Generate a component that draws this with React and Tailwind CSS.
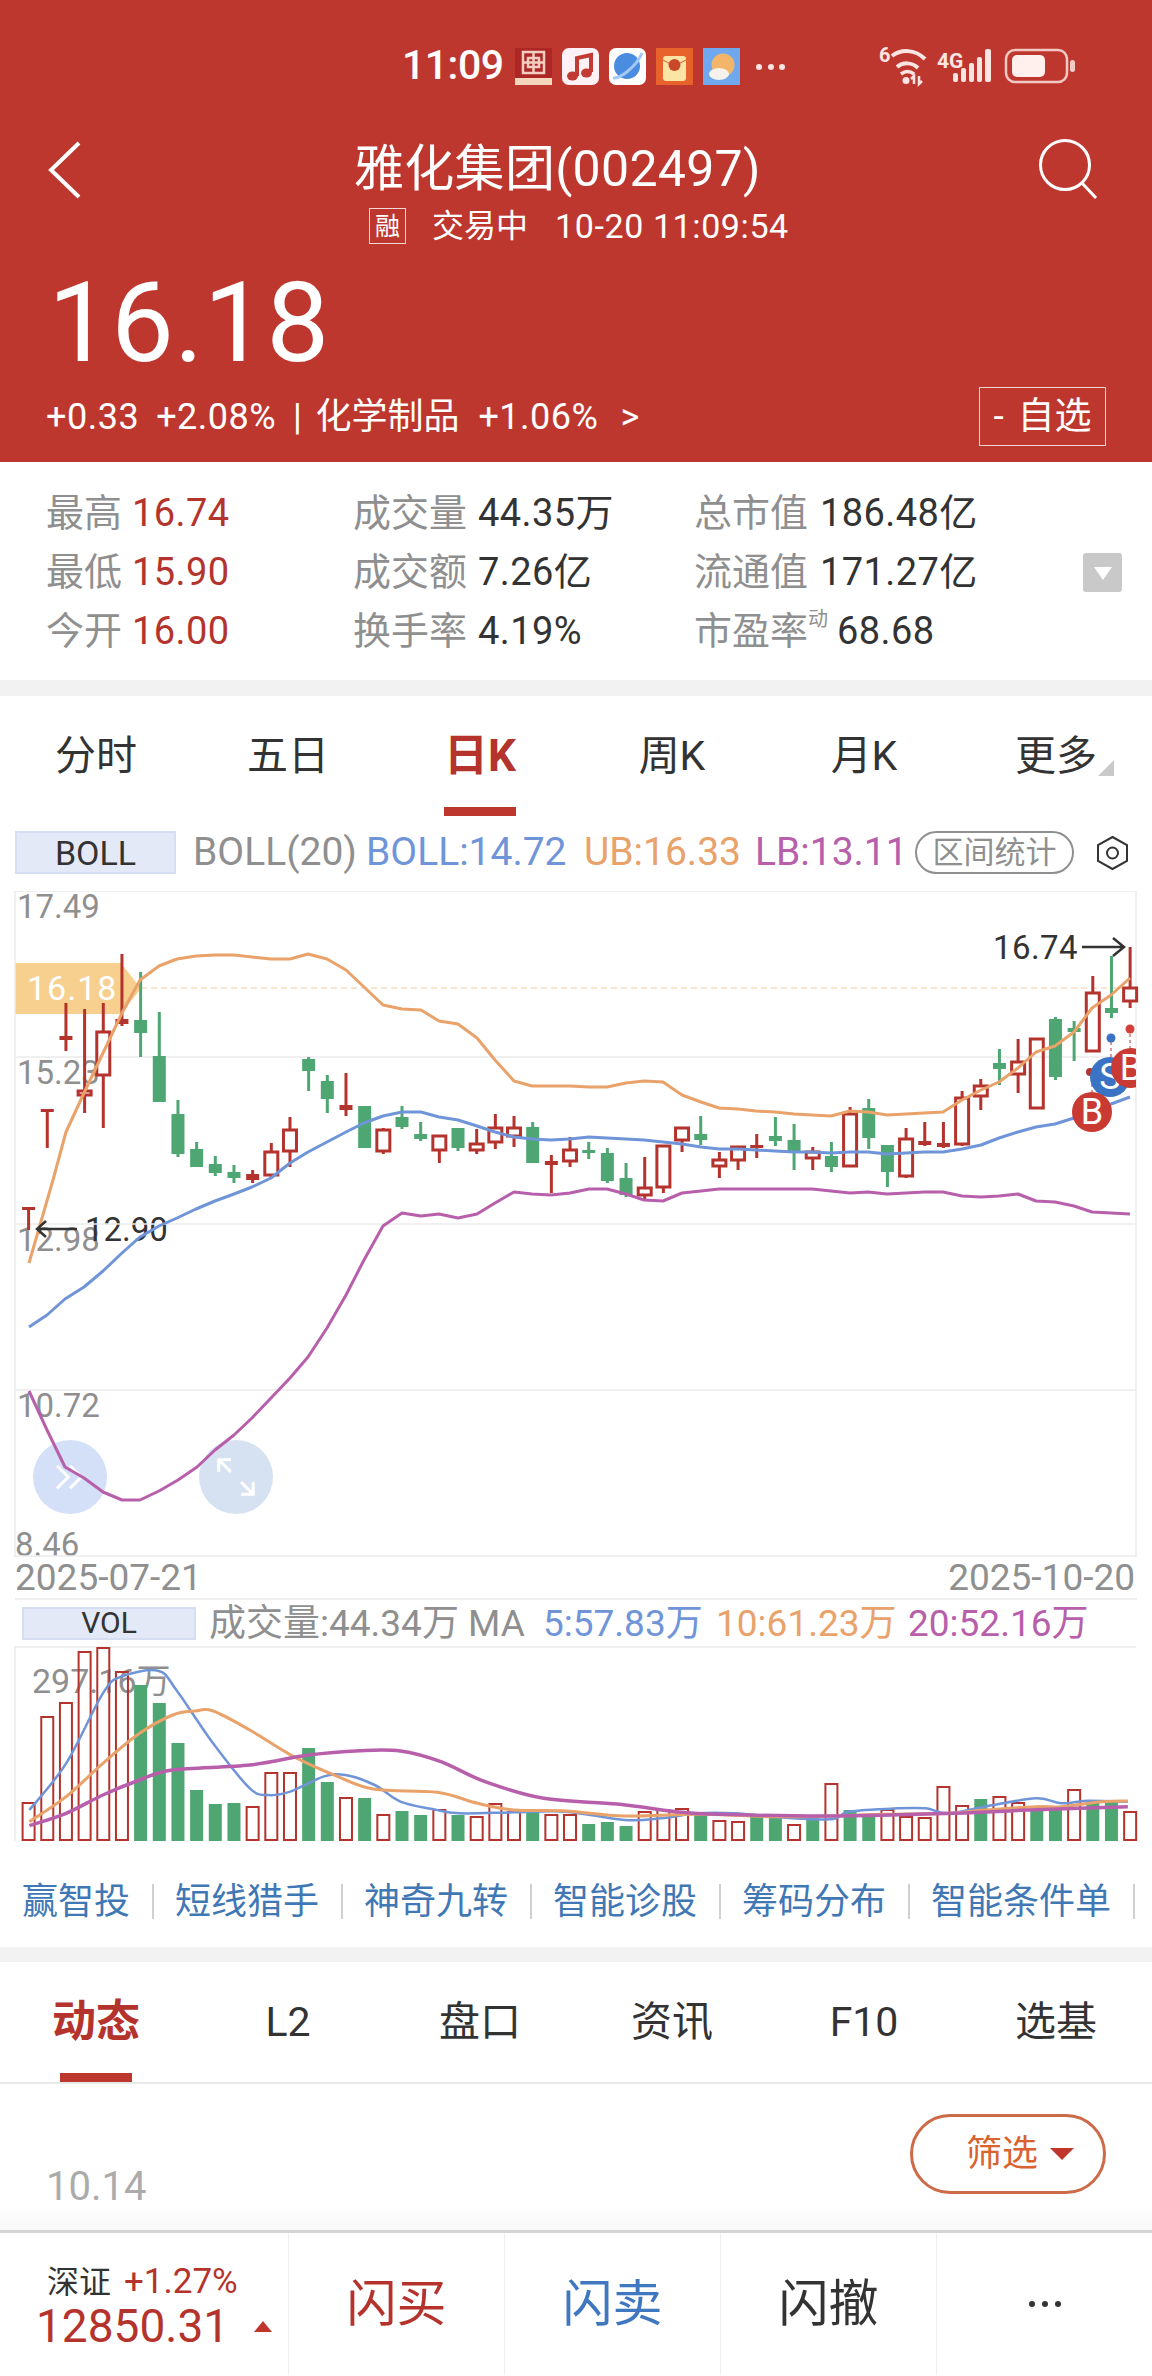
const RED = "#b5332d";
const GREEN = "#4ea672";
const ORANGE = "#e8a26a";
const BLUE = "#6f95d8";
const PURPLE = "#b85fab";

// high, body top, body bottom, low, type (r hollow red, f filled red, g green)
const candles = [
  [1207, 1207, 1210, 1230, "f"], [1109, 1109, 1112, 1148, "f"], [1003, 1036, 1040, 1051, "f"], [1009, 1090, 1096, 1113, "r"],
  [1003, 1031, 1076, 1128, "r"], [954, 1019, 1024, 1026, "f"], [972, 1020, 1033, 1057, "g"], [1012, 1056, 1102, 1102, "g"],
  [1100, 1114, 1154, 1157, "g"], [1142, 1149, 1167, 1167, "g"], [1156, 1164, 1173, 1176, "g"], [1165, 1172, 1178, 1183, "g"],
  [1170, 1174, 1180, 1183, "f"], [1143, 1151, 1176, 1178, "r"], [1117, 1129, 1152, 1167, "r"], [1057, 1059, 1071, 1091, "g"],
  [1075, 1081, 1099, 1113, "g"], [1073, 1105, 1110, 1116, "f"], [1106, 1106, 1148, 1148, "g"], [1128, 1129, 1152, 1154, "r"],
  [1106, 1117, 1127, 1129, "g"], [1122, 1134, 1139, 1141, "g"], [1135, 1135, 1151, 1163, "r"], [1128, 1128, 1148, 1151, "g"],
  [1129, 1143, 1151, 1154, "r"], [1114, 1127, 1143, 1149, "r"], [1116, 1127, 1137, 1147, "r"], [1122, 1127, 1163, 1163, "g"],
  [1155, 1161, 1165, 1193, "f"], [1137, 1149, 1162, 1167, "r"], [1142, 1150, 1153, 1159, "g"], [1148, 1153, 1181, 1183, "g"],
  [1163, 1178, 1195, 1197, "g"], [1157, 1187, 1196, 1201, "r"], [1145, 1145, 1188, 1193, "r"], [1127, 1127, 1141, 1152, "r"],
  [1116, 1134, 1140, 1145, "g"], [1152, 1159, 1167, 1178, "r"], [1146, 1146, 1161, 1170, "r"], [1134, 1145, 1148, 1158, "f"],
  [1117, 1136, 1141, 1146, "g"], [1124, 1140, 1153, 1170, "g"], [1147, 1151, 1159, 1170, "r"], [1142, 1156, 1167, 1172, "g"],
  [1107, 1113, 1167, 1167, "r"], [1099, 1108, 1138, 1149, "g"], [1145, 1145, 1172, 1187, "g"], [1128, 1138, 1177, 1178, "r"],
  [1122, 1141, 1145, 1146, "f"], [1122, 1143, 1147, 1148, "f"], [1091, 1097, 1145, 1146, "r"], [1079, 1085, 1097, 1110, "r"],
  [1049, 1063, 1069, 1085, "g"], [1039, 1061, 1075, 1093, "r"], [1038, 1038, 1109, 1109, "r"], [1017, 1019, 1077, 1080, "g"],
  [1021, 1028, 1032, 1061, "g"], [976, 992, 1052, 1052, "r"], [956, 1008, 1013, 1018, "g"], [947, 987, 1002, 1008, "r"],
];

const upper = [[29,1263],[53,1180],[66,1132],[84,1093],[103,1053],[122,1013],[140,980],[159,966],[177,959],[196,956],[215,955],[234,955],[252,957],[271,959],[290,959],[308,954],[327,959],[346,970],[364,987],[383,1005],[402,1009],[421,1010],[439,1021],[458,1024],[477,1038],[495,1060],[514,1081],[532,1086],[551,1086],[570,1086],[589,1087],[607,1087],[626,1083],[644,1081],[663,1082],[682,1095],[701,1102],[719,1108],[738,1109],[756,1111],[775,1112],[794,1114],[812,1115],[831,1116],[850,1111],[868,1112],[887,1115],[906,1114],[924,1113],[943,1112],[962,1100],[981,1090],[999,1082],[1018,1068],[1036,1052],[1055,1046],[1074,1032],[1092,1008],[1111,995],[1130,978]];
const middle = [[29,1327],[47,1315],[65,1299],[84,1287],[103,1271],[122,1253],[140,1237],[159,1226],[177,1218],[196,1209],[215,1201],[234,1194],[252,1187],[271,1178],[290,1163],[308,1152],[327,1142],[346,1132],[364,1123],[383,1116],[402,1112],[421,1112],[439,1117],[458,1120],[477,1126],[495,1132],[514,1137],[532,1139],[551,1140],[570,1139],[589,1137],[607,1138],[626,1139],[644,1140],[663,1142],[682,1144],[701,1147],[719,1149],[738,1149],[756,1150],[775,1151],[794,1152],[812,1152],[831,1153],[850,1152],[868,1152],[887,1154],[906,1153],[924,1152],[943,1152],[962,1149],[981,1145],[999,1138],[1018,1132],[1036,1127],[1055,1124],[1074,1118],[1092,1112],[1111,1104],[1130,1097]];
const lower = [[29,1391],[47,1430],[65,1467],[84,1478],[103,1492],[122,1500],[140,1500],[159,1491],[178,1480],[197,1467],[215,1450],[234,1435],[252,1418],[271,1398],[290,1378],[308,1357],[327,1328],[346,1295],[364,1260],[383,1226],[402,1213],[421,1216],[439,1214],[458,1218],[477,1214],[495,1203],[514,1192],[532,1194],[551,1195],[570,1193],[589,1189],[607,1189],[626,1194],[644,1200],[663,1201],[682,1193],[701,1191],[719,1189],[738,1189],[756,1189],[775,1189],[794,1189],[812,1189],[831,1191],[850,1193],[868,1192],[887,1194],[906,1193],[924,1192],[943,1192],[962,1196],[981,1197],[999,1196],[1018,1194],[1036,1201],[1055,1202],[1074,1206],[1092,1212],[1111,1213],[1130,1214]];

// top of each volume bar, r = hollow red, g = green
const volumes = [
  [1803,"r"],[1717,"r"],[1703,"r"],[1652,"r"],[1648,"r"],[1672,"r"],[1685,"g"],[1703,"g"],[1743,"g"],[1790,"g"],
  [1804,"g"],[1803,"g"],[1807,"r"],[1773,"r"],[1773,"r"],[1748,"g"],[1782,"g"],[1798,"r"],[1798,"g"],[1815,"r"],
  [1811,"g"],[1815,"g"],[1810,"r"],[1815,"g"],[1817,"r"],[1804,"r"],[1812,"r"],[1812,"g"],[1815,"r"],[1815,"r"],
  [1824,"g"],[1822,"g"],[1826,"g"],[1812,"r"],[1810,"r"],[1809,"r"],[1813,"g"],[1821,"r"],[1822,"r"],[1817,"g"],
  [1817,"g"],[1825,"r"],[1818,"g"],[1784,"r"],[1810,"g"],[1815,"g"],[1810,"r"],[1817,"r"],[1818,"r"],[1787,"r"],
  [1806,"r"],[1799,"g"],[1797,"r"],[1803,"r"],[1810,"g"],[1808,"g"],[1790,"r"],[1800,"g"],[1802,"g"],[1812,"r"],
];

const vol = (pts) => pts.map(([x, y]) => [x / 1.361, 1480 + y / 3]);
const vol5 = vol([[40,990],[90,850],[140,640],[165,590],[215,572],[240,630],[290,790],[340,925],[365,945],[395,935],[440,890],[470,885],[510,915],[545,965],[590,988],[625,1000],[700,997],[770,995],[850,1020],[900,1015],[950,1000],[1000,1000],[1050,1010],[1130,1018],[1155,995],[1220,985],[1260,985],[1290,1000],[1340,980],[1410,955],[1445,970],[1480,962],[1535,965]]);
const vol10 = vol([[40,1025],[90,950],[140,850],[190,760],[235,705],[265,693],[290,693],[340,750],[400,830],[460,890],[510,928],[595,937],[650,970],[700,990],[770,993],[850,1008],[950,1003],[1050,1010],[1130,1008],[1200,1003],[1290,1000],[1340,990],[1410,980],[1445,980],[1500,965],[1535,963]]);
const vol20 = vol([[40,1037],[90,1000],[140,945],[190,900],[235,870],[340,855],[420,825],[490,812],[545,813],[600,845],[660,905],[740,955],[840,972],[920,995],[980,1003],[1130,1008],[1300,1000],[1400,990],[1535,980]]);

const barX = (i) => 28.6 + 18.67 * i;
const toLine = (pts) => pts.map((p) => p.join(",")).join(" ");

// catmull-rom so the volume averages come out as soft curves
const toCurve = (pts) => {
  let d = `M${pts[0][0]} ${pts[0][1]}`;
  for (let i = 0; i < pts.length - 1; i++) {
    const p0 = pts[i - 1] || pts[i];
    const p1 = pts[i];
    const p2 = pts[i + 1];
    const p3 = pts[i + 2] || p2;
    d += ` C${p1[0] + (p2[0] - p0[0]) / 6} ${p1[1] + (p2[1] - p0[1]) / 6} ${p2[0] - (p3[0] - p1[0]) / 6} ${p2[1] - (p3[1] - p1[1]) / 6} ${p2[0]} ${p2[1]}`;
  }
  return d;
};

const StatusBar = () => (
  <div className="mt-[40px] h-[50px] flex pl-[402px]">
    <span className="w-[103px] text-[41px] leading-[50px] font-medium tracking-[-0.5px]">11:09</span>
    <svg className="ml-[5px]" width="290" height="50" viewBox="510 40 290 50">
      <rect x="515" y="48" width="37" height="37" fill="#ad2727" />
      <rect x="515" y="78" width="37" height="7" fill="#f3d6bb" />
      <path d="M523 52h21v21h-21zM528 58h11v9h-11zM523 62.500h21M533.500 52v21" fill="none" stroke="#f3cfc2" strokeWidth="2.500" />
      <rect x="562" y="48" width="37" height="37" rx="7" fill="#fdf1f5" />
      <path d="M577 76V58l14-3v17" fill="none" stroke="#c23a34" strokeWidth="4" />
      <ellipse cx="572.500" cy="76" rx="5.500" ry="4.500" fill="#c23a34" />
      <ellipse cx="586.500" cy="73" rx="5.500" ry="4.500" fill="#c23a34" />
      <rect x="609" y="48" width="37" height="37" rx="7" fill="#ffffff" />
      <circle cx="627" cy="66" r="13" fill="#4a8de0" />
      <path d="M613 78c7 1 24-12 29-25" fill="none" stroke="#a3c8f3" strokeWidth="3" />
      <rect x="656" y="48" width="37" height="37" fill="#e8622b" />
      <rect x="663" y="56" width="23" height="25" rx="3" fill="#fce5a4" />
      <path d="M663 60l11.500 6 11.500-6" fill="none" stroke="#d9572a" strokeWidth="1" />
      <circle cx="674.500" cy="65" r="6" fill="#c9482a" />
      <rect x="703" y="48" width="37" height="37" fill="#6fa8ee" />
      <circle cx="723" cy="65" r="11.500" fill="#f3b668" />
      <ellipse cx="719" cy="74" rx="10" ry="6" fill="#f5f2ee" />
      <circle cx="759" cy="67" r="3" fill="#fbe5e2" />
      <circle cx="771" cy="67" r="3" fill="#fbe5e2" />
      <circle cx="782" cy="67" r="3" fill="#fbe5e2" />
    </svg>
    <svg className="ml-[70px]" width="215" height="50" viewBox="870 40 215 50" fill="none">
      <text x="879" y="62" fontSize="20" fontWeight="700" fill="#fbe5e2">6</text>
      <path d="M892 56c9-7 23-7 33 3" stroke="#fbe5e2" strokeWidth="4" />
      <path d="M897 67c6-5 15-5 21 1" stroke="#fbe5e2" strokeWidth="4" />
      <path d="M901 74c4-3 9-3 13 0" stroke="#fbe5e2" strokeWidth="3.500" />
      <circle cx="906" cy="80.500" r="3.500" fill="#fbe5e2" />
      <path d="M914 84v-8l-3 3M919 76v8l3-3" stroke="#fbe5e2" strokeWidth="2.500" />
      <text x="937" y="68" fontSize="21" fontWeight="700" fill="#fbe5e2">4G</text>
      <rect x="953" y="73" width="5" height="9" rx="2" fill="#fbe5e2" />
      <rect x="961" y="68" width="5" height="14" rx="2" fill="#fbe5e2" />
      <rect x="969" y="63" width="5" height="19" rx="2" fill="#fbe5e2" />
      <rect x="977" y="57" width="5" height="25" rx="2" fill="#fbe5e2" />
      <rect x="985" y="49" width="6" height="33" rx="2" fill="#fbe5e2" />
      <rect x="1006" y="50" width="61" height="32" rx="9" stroke="#f3c9c4" strokeWidth="2.500" />
      <rect x="1012" y="55" width="33" height="22" rx="5" fill="#fff0ee" />
      <rect x="1070" y="60" width="5" height="12" rx="2.500" fill="#f3c9c4" />
    </svg>
  </div>
);

const Header = () => (
  <div className="h-[462px] bg-[#be372f] text-white flex flex-col">
    <StatusBar />
    <div className="mt-[52px] h-[54px] flex items-center">
      <svg className="ml-[46px]" width="36" height="60" viewBox="0 0 36 60" fill="none">
        <path d="M33 4L5 31l28 27" stroke="#fff" strokeWidth="4" />
      </svg>
      <span className="ml-[272px] text-[50px] tracking-[0.3px] leading-[54px] whitespace-nowrap">雅化集团(002497)</span>
      <svg className="ml-auto mr-[52px]" width="62" height="62" viewBox="0 0 62 62" fill="none">
        <circle cx="27" cy="27" r="24.500" stroke="#fff" strokeWidth="3" />
        <path d="M44 45l14 15" stroke="#fff" strokeWidth="3" />
      </svg>
    </div>
    <div className="mt-[12px] h-[36px] flex items-center pl-[369px]">
      <span className="w-[37px] h-[36px] border border-[#f3d7d4] flex items-center justify-center text-[25px] leading-none">融</span>
      <span className="ml-[26px] text-[32px] leading-none">交易中</span>
      <span className="ml-[27px] text-[34px] tracking-[0.6px] leading-none whitespace-nowrap">10-20 11:09:54</span>
    </div>
    <div className="mt-[23px] pl-[48px] h-[112px] text-[112px] leading-[112px] font-normal">16.18</div>
    <div className="mt-[8px] h-[59px] flex items-center pl-[46px] pr-[46px] text-[36px] leading-none tracking-[0.5px] whitespace-nowrap">
      <span>+0.33</span>
      <span className="ml-[17px]">+2.08%</span>
      <span className="ml-[17px]">|</span>
      <span className="ml-[13px] tracking-normal">化学制品</span>
      <span className="ml-[19px]">+1.06%</span>
      <span className="ml-[22px]">&gt;</span>
      <span className="ml-auto w-[127px] h-[59px] border border-[#f3d7d4] flex items-center justify-center gap-[14px] text-[37px] tracking-normal">
        <span>-</span>
        <span>自选</span>
      </span>
    </div>
  </div>
);

const stats = [
  [["最高", "16.74"], ["成交量", "44.35万"], ["总市值", "186.48亿"]],
  [["最低", "15.90"], ["成交额", "7.26亿"], ["流通值", "171.27亿"]],
  [["今开", "16.00"], ["换手率", "4.19%"], ["市盈率", "68.68"]],
];

const Stats = () => (
  <div className="h-[218px] pt-[22px] pl-[46px] pr-[30px] flex flex-col text-[38px] leading-[59px]">
    {stats.map((row, r) => (
      <div key={r} className="h-[59px] flex items-center whitespace-nowrap">
        <div className="w-[307px] flex gap-[10px]">
          <span className="text-[#8f8f8f]">{row[0][0]}</span>
          <span className="text-[#b5332d] tracking-[0.4px]">{row[0][1]}</span>
        </div>
        <div className="w-[341px] flex gap-[11px]">
          <span className="text-[#8f8f8f]">{row[1][0]}</span>
          <span className="text-[#333] tracking-[0.4px]">{row[1][1]}</span>
        </div>
        <div className="flex gap-[12px] items-center">
          <span className="text-[#8f8f8f] flex">
            {row[2][0]}
            {r === 2 && <span className="text-[20px] leading-[34px] text-[#8f8f8f]">动</span>}
          </span>
          <span className={`text-[#333] tracking-[0.4px] ${r === 2 ? "-ml-[3px]" : ""}`}>{row[2][1]}</span>
        </div>
        {r === 1 && (
          <span className="ml-auto w-[39px] h-[39px] rounded-[3px] bg-[#c9c9c9] flex items-center justify-center">
            <svg width="20" height="14" viewBox="0 0 20 14"><path d="M1 1h18L10 14z" fill="#fff" /></svg>
          </span>
        )}
      </div>
    ))}
  </div>
);

const Tabs = ({ items, active, corner }) => (
  <div className="grid grid-cols-6 h-[120px] text-[41px] leading-none text-[#333]">
    {items.map((t, i) => (
      <div key={t} className={`relative flex items-center justify-center ${i === active ? "text-[#b5332d] text-[44px] font-bold" : ""}`}>
        {t}
        {i === active && <span className="absolute bottom-0 left-1/2 -translate-x-1/2 w-[72px] h-[9px] bg-[#be372f]" />}
        {corner && i === 5 && (
          <svg className="absolute left-[138px] top-[64px]" width="16" height="16" viewBox="0 0 16 16"><path d="M16 0v16H0z" fill="#c9c9c9" /></svg>
        )}
      </div>
    ))}
  </div>
);

const BollRow = () => (
  <div className="mt-[15px] h-[43px] flex items-center pl-[15px] text-[39px] leading-none whitespace-nowrap">
    <span className="w-[161px] h-[43px] bg-[#e3e9f6] border-2 border-[#d6dff2] flex items-center justify-center text-[34px] text-[#333]">BOLL</span>
    <span className="ml-[17px] w-[173px] text-[#8f8f8f]">BOLL(20)</span>
    <span className="w-[218px] text-[#6f95d8]">BOLL:14.72</span>
    <span className="w-[171px] text-[#e8a26a]">UB:16.33</span>
    <span className="w-[160px] text-[#b85fab]">LB:13.11</span>
    <span className="w-[159px] h-[43px] rounded-full border-2 border-[#8f8f8f] flex items-center justify-center text-[31px] text-[#8f8f8f]">区间统计</span>
    <svg className="ml-[22px]" width="33" height="36" viewBox="0 0 33 36" fill="none">
      <path d="M16.500 2L31 10v16l-14.500 8L2 26V10z" stroke="#333" strokeWidth="2" />
      <circle cx="16.500" cy="18" r="5.500" stroke="#333" strokeWidth="2" />
    </svg>
  </div>
);

const axisLabels = [
  ["17.49", -1, 17],
  ["15.23", 165, 17],
  ["12.98", 332, 17],
  ["10.72", 498, 17],
  ["8.46", 637, 15],
];

const Candle = ({ c, i }) => {
  const x = barX(i);
  const [high, top, bot, low, type] = c;
  const color = type === "g" ? GREEN : RED;
  return (
    <g>
      <rect x={x - 1.5} y={high} width="3" height={top - high} fill={color} />
      <rect x={x - 1.5} y={bot} width="3" height={low - bot} fill={color} />
      {type === "r" ? (
        <rect x={x - 6.500} y={top + 1} width="13" height={bot - top - 2} stroke={color} strokeWidth="3" />
      ) : (
        <rect x={x - 6.500} y={top} width="13" height={bot - top} fill={color} />
      )}
    </g>
  );
};

const Badge = ({ left, top, color, children }) => (
  <span className="absolute w-[40px] h-[40px] rounded-full flex items-center justify-center text-white text-[36px] leading-none" style={{ left, top, backgroundColor: color }}>
    {children}
  </span>
);

const KChart = () => (
  <div className="mt-[17px] relative h-[666px]">
    {/* price tag sits under the candles */}
    <div className="absolute left-[15px] top-[72px] w-[126px] h-[51px] bg-[#f7cf8e] [clip-path:polygon(0_0,84%_0,100%_50%,84%_100%,0_100%)]" />
    <span className="absolute left-[27px] top-[74px] text-[34px] leading-[47px] tracking-[1px] text-white">16.18</span>
    {axisLabels.map(([t, top, left]) => (
      <span key={t} className="absolute text-[33px] leading-[34px] text-[#8f8f8f]" style={{ top, left }}>{t}</span>
    ))}
    <span className="absolute left-[85px] top-[322px] text-[33px] leading-[34px] text-[#333] whitespace-nowrap">12.90</span>
    <div className="absolute left-[33px] top-[549px] w-[74px] h-[74px] rounded-full bg-[#d4dff8] flex items-center justify-center">
      <svg width="30" height="26" viewBox="0 0 34 30" fill="none">
        <path d="M2 2l13 13L2 28M17 2l13 13-13 13" stroke="#fff" strokeWidth="3.500" />
      </svg>
    </div>
    <div className="absolute left-[199px] top-[549px] w-[74px] h-[74px] rounded-full bg-[#d6e2f2] flex items-center justify-center">
      <svg width="38" height="38" viewBox="0 0 44 44" fill="none">
        <path d="M2 16V2h14M2 2l14 14M42 28v14H28M42 42L28 28" stroke="#fff" strokeWidth="3.500" />
      </svg>
    </div>
    <svg className="absolute inset-0" width="1152" height="666" viewBox="0 891 1152 666" fill="none">
      <path d="M15 891h1121M15 1057h1121M15 1224h1121M15 1390h1121M15 1556h1121M15 891v666M1136 891v666" stroke="#ececec" strokeWidth="1.500" />
      <path d="M141 988h995" stroke="#f3c8a0" strokeWidth="1" strokeDasharray="6 4" />
      {candles.map((c, i) => <Candle key={i} c={c} i={i} />)}
      <path d="M1092 1072v24M1111 1042v18M1130 1034v16" stroke={RED} strokeWidth="1" strokeDasharray="3 3" />
      <circle cx="1090" cy="1072" r="4" fill={RED} />
      <circle cx="1111" cy="1038" r="4.500" fill="#3b73c4" />
      <circle cx="1130" cy="1029" r="4.500" fill="#d2403a" />
      <polyline points={toLine(upper)} stroke={ORANGE} strokeWidth="3" strokeLinejoin="round" />
      <polyline points={toLine(middle)} stroke={BLUE} strokeWidth="3" strokeLinejoin="round" />
      <polyline points={toLine(lower)} stroke={PURPLE} strokeWidth="3" strokeLinejoin="round" />
      <path d="M1082 947h42M1113 938l11 9-11 9" stroke="#333" strokeWidth="2.500" />
      <path d="M77 1229H37M46 1221l-9 8 9 8" stroke="#333" strokeWidth="2.500" />
    </svg>
    <span className="absolute left-[993px] top-[40px] text-[33px] leading-[34px] tracking-[0.4px] text-[#333]">16.74</span>
    <div className="absolute inset-y-0 left-0 w-[1136px] overflow-hidden">
      <Badge left={1090} top={166} color="#3b73c4">S</Badge>
      <Badge left={1111} top={157} color="#c93a33">B</Badge>
      <Badge left={1072} top={201} color="#c93a33">B</Badge>
    </div>
  </div>
);

const VolChart = () => (
  <div className="relative h-[195px]">
    <span className="absolute left-[32px] top-[18px] text-[34px] leading-[34px] text-[#8f8f8f] whitespace-nowrap">297.16万</span>
    <svg className="absolute inset-0" width="1152" height="195" viewBox="0 1646 1152 195" fill="none">
      <path d="M15 1647h1121M15 1646v195" stroke="#ececec" strokeWidth="1.500" />
      {volumes.map(([top, type], i) =>
        type === "r" ? (
          <rect key={i} x={barX(i) - 6} y={top} width="12" height={1840 - top} stroke={RED} strokeWidth="2" />
        ) : (
          <rect key={i} x={barX(i) - 6.500} y={top} width="13" height={1841 - top} fill={GREEN} />
        ),
      )}
      <path d={toCurve(vol5)} stroke={BLUE} strokeWidth="2.500" />
      <path d={toCurve(vol10)} stroke={ORANGE} strokeWidth="3" />
      <path d={toCurve(vol20)} stroke={PURPLE} strokeWidth="3.500" />
    </svg>
  </div>
);

const links = ["赢智投", "短线猎手", "神奇九转", "智能诊股", "筹码分布", "智能条件单"];

const App = () => (
  <div className="w-[1152px] h-[2376px] overflow-hidden bg-white flex flex-col font-['Roboto','Noto_Sans_CJK_SC',sans-serif]">
    <Header />
    <Stats />
    <div className="h-[16px] bg-[#f2f2f2]" />
    <Tabs items={["分时", "五日", "日K", "周K", "月K", "更多"]} active={2} corner />
    <BollRow />
    <KChart />
    <div className="h-[41px] flex items-center justify-between pl-[15px] pr-[17px] text-[37px] leading-none text-[#8f8f8f]">
      <span>2025-07-21</span>
      <span>2025-10-20</span>
    </div>
    <div className="h-[48px] mx-[15px] border-t-2 border-[#efefef] flex items-center pl-[7px] text-[37px] leading-none whitespace-nowrap">
      <span className="w-[174px] h-[33px] bg-[#e3e9f6] border-2 border-[#d6dff2] flex items-center justify-center text-[30px] text-[#333]">VOL</span>
      <span className="ml-[13px] w-[334px] text-[#8f8f8f]">成交量:44.34万 MA</span>
      <span className="w-[173px] text-[#6f95d8]">5:57.83万</span>
      <span className="w-[192px] text-[#e8a26a]">10:61.23万</span>
      <span className="text-[#b85fab]">20:52.16万</span>
    </div>
    <VolChart />
    <div className="mt-[43px] h-[35px] flex items-center gap-[21.5px] pl-[22px] text-[36px] leading-none text-[#3f78b5] whitespace-nowrap">
      {links.map((t) => (
        <div key={t} className="flex items-center gap-[21.5px]">
          <span>{t}</span>
          <span className="w-[2px] h-[35px] bg-[#d0d0d0]" />
        </div>
      ))}
    </div>
    <div className="mt-[28px] h-[15px] bg-[#f2f2f2]" />
    <div className="border-b-2 border-[#e8e8e8]">
      <Tabs items={["动态", "L2", "盘口", "资讯", "F10", "选基"]} active={0} />
    </div>
    <div className="relative h-[146px] flex items-start">
      <div className="absolute inset-x-0 bottom-0 h-[26px] bg-linear-to-b from-white to-[#f8f8f8]" />
      <span className="relative ml-[46px] mt-[83px] text-[40px] leading-[40px] text-[#ababab]">10.14</span>
      <div className="relative ml-auto mr-[46px] mt-[30px] w-[196px] h-[80px] rounded-full border-[3px] border-[#cd6a47] flex items-center justify-center gap-[12px] pl-[24px] text-[36px] leading-none text-[#d9622d]">
        筛选
        <svg width="24" height="12" viewBox="0 0 24 12"><path d="M0 0h24L12 12z" fill="#c0362c" /></svg>
      </div>
    </div>
    <div className="h-[145px] border-t-[3px] border-[#d4d4d4] flex text-[50px] leading-none">
      <div className="w-[288px] pl-[36px] flex flex-col">
        <div className="mt-[33px] pl-[11px] flex items-center gap-[13px] text-[32px] leading-[32px] whitespace-nowrap">
          <span className="text-[#333]">深证</span>
          <span className="text-[#b5332d] text-[35px]">+1.27%</span>
        </div>
        <div className="mt-[5px] flex items-center gap-[25px] text-[46px] leading-[46px] text-[#b5332d]">
          12850.31
          <svg width="18" height="11" viewBox="0 0 18 11"><path d="M9 0l9 11H0z" fill="#c0362c" /></svg>
        </div>
      </div>
      <div className="w-[216px] border-l border-[#efefef] flex items-center justify-center text-[#b5332d]">闪买</div>
      <div className="w-[216px] border-l border-[#efefef] flex items-center justify-center text-[#3f78c0]">闪卖</div>
      <div className="w-[216px] border-l border-[#efefef] flex items-center justify-center text-[#333]">闪撤</div>
      <div className="w-[216px] border-l border-[#efefef] flex items-center justify-center">
        <svg width="34" height="8" viewBox="0 0 34 8" fill="#333">
          <circle cx="4" cy="4" r="3" />
          <circle cx="17" cy="4" r="3" />
          <circle cx="30" cy="4" r="3" />
        </svg>
      </div>
    </div>
  </div>
);

export default App;
